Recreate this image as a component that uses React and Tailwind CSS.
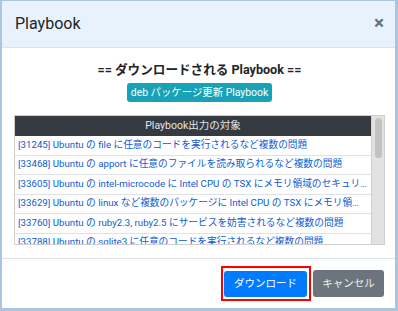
import React from 'react';

const rows = [
    '[31245] Ubuntu の file に任意のコードを実行されるなど複数の問題',
    '[33468] Ubuntu の apport に任意のファイルを読み取られるなど複数の問題',
    '[33605] Ubuntu の intel-microcode に Intel CPU の TSX にメモリ領域のセキュリティ保護を回避される問題',
    '[33629] Ubuntu の linux など複数のパッケージに Intel CPU の TSX にメモリ領域の情報を取得される問題',
    '[33760] Ubuntu の ruby2.3, ruby2.5 にサービスを妨害されるなど複数の問題',
    '[33788] Ubuntu の sqlite3 に任意のコードを実行されるなど複数の問題',
    '[33802] Ubuntu の openssl にサービスを妨害される問題',
];

export default function App() {
    return (
        <div
            className="w-[398px] h-[311px] bg-[#a9c5e0] pl-[2px] pt-px pr-[3px] pb-[3px] text-[#212529]"
            style={{ fontFamily: 'Roboto, "Noto Sans CJK JP", sans-serif' }}
        >
            <div className="h-full bg-white flex flex-col">
                {/* header */}
                <div className="h-[47px] shrink-0 bg-[#e8f2fd] border-b border-[#dee2e6] flex items-center justify-between pl-[13px] pr-[11px]">
                    <h5 className="text-[16px] leading-none">Playbook</h5>
                    <span className="text-[19px] font-bold leading-none text-[#6c7075] -mt-[3px]">×</span>
                </div>

                {/* body */}
                <div className="flex flex-col items-center pt-[12px] pl-[12px] pr-[10px] pb-[13px]">
                    <h4 className="text-[12.6px] font-bold leading-[19px]">== ダウンロードされる Playbook ==</h4>
                    <span className="mt-[4px] h-[19px] px-[4px] rounded-[3px] bg-[#17a2b8] text-white text-[10.4px] flex items-center">
                        deb パッケージ更新 Playbook
                    </span>

                    <div className="mt-[13px] self-stretch h-[130px] border border-[#cfcfcf] flex overflow-hidden">
                        <div className="flex-1 min-w-0">
                            <div className="h-[20px] bg-[#343a40] text-[#e4e4e4] text-[10.5px] flex items-center justify-center">
                                Playbook出力の対象
                            </div>
                            {rows.map((r) => (
                                <div
                                    key={r}
                                    className="h-[19.5px] border-b border-[#dee2e6] px-[3px] flex items-center text-[9.7px] text-[#0d5bd0]"
                                >
                                    <span className="truncate">{r}</span>
                                </div>
                            ))}
                        </div>
                        <div className="w-[13px] shrink-0 bg-[#e2e2e2] border-l border-[#d0d0d0] pt-[2px]">
                            <div className="mx-auto w-[7px] h-[40px] rounded-full bg-[#c2c2c2]"></div>
                        </div>
                    </div>
                </div>

                {/* footer */}
                <div className="flex-1 border-t border-[#dee2e6] flex items-center justify-end pr-[11px] gap-[2.5px]">
                    <div className="border-2 border-[#ff0000] p-[1.5px]">
                        <button className="w-[83px] h-[26.5px] rounded-[3px] bg-[#007bff] text-white text-[10.5px]">
                            ダウンロード
                        </button>
                    </div>
                    <button className="w-[71px] h-[26.5px] rounded-[3px] bg-[#6c757d] text-[#eceeef] text-[10.5px]">
                        キャンセル
                    </button>
                </div>
            </div>
        </div>
    );
}
